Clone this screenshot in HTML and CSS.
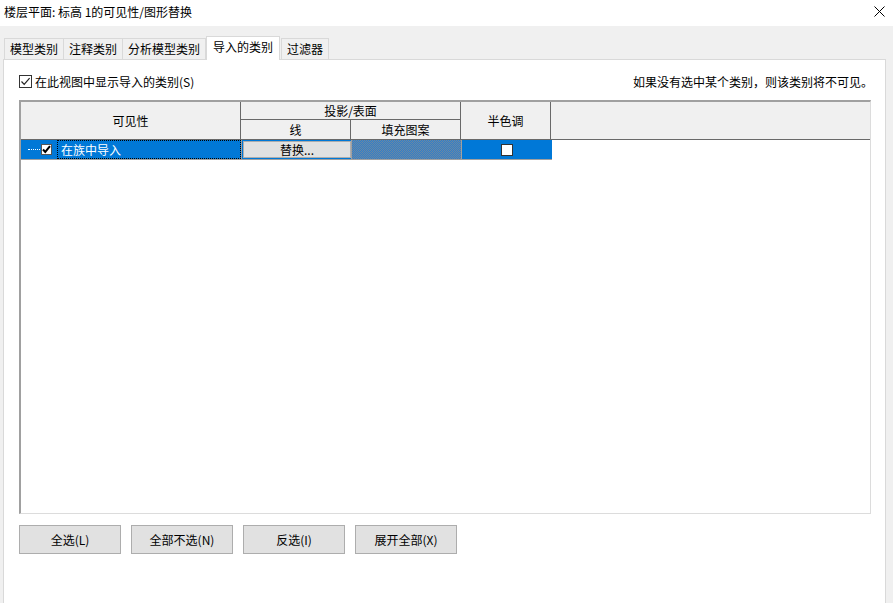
FILE: index.html
```html
<!DOCTYPE html>
<html lang="zh">
<head>
    <meta charset="UTF-8">
    <title>可见性/图形替换</title>
    <link rel="stylesheet" href="styles.css">
</head>
<body>
    <div class="titlebar">
        <span class="title">楼层平面: 标高 1的可见性/图形替换</span>
        <svg class="close" width="11" height="11" viewBox="0 0 11 11"><path d="M0.5 0.5L10.5 10.5M10.5 0.5L0.5 10.5" stroke="#000" stroke-width="1"/></svg>
    </div>

    <div class="dialog">
        <div class="tabs">
            <div class="tab">模型类别</div>
            <div class="tab">注释类别</div>
            <div class="tab">分析模型类别</div>
            <div class="tab active">导入的类别</div>
            <div class="tab">过滤器</div>
        </div>

        <div class="panel">
            <div class="topline">
                <label class="check-label">
                    <span class="cbox"><svg width="11" height="11" viewBox="0 0 11 11"><path d="M1.5 5.5L4.2 8.3L9.6 2.2" fill="none" stroke="#222" stroke-width="1.2"/></svg></span>
                    在此视图中显示导入的类别(S)
                </label>
                <span class="hint">如果没有选中某个类别，则该类别将不可见。</span>
            </div>

            <div class="grid">
                <div class="head">
                    <div class="hcell vis">可见性</div>
                    <div class="hgroup">
                        <div class="hcell htop">投影/表面</div>
                        <div class="hsub">
                            <div class="hcell line">线</div>
                            <div class="hcell fill">填充图案</div>
                        </div>
                    </div>
                    <div class="hcell half">半色调</div>
                    <div class="hcell rest"></div>
                </div>

                <div class="row">
                    <div class="cell vis">
                        <span class="dots"></span>
                        <span class="rbox"><svg width="9" height="9" viewBox="0 0 9 9"><path d="M1 4.5L3.3 7L8 1.2" fill="none" stroke="#000" stroke-width="2"/></svg></span>
                        <span class="name">在族中导入</span>
                    </div>
                    <div class="cell line"><span class="override">替换...</span></div>
                    <div class="cell fill pattern"></div>
                    <div class="cell half"><span class="hbox"></span></div>
                </div>
            </div>

            <div class="buttons">
                <button class="btn">全选(L)</button>
                <button class="btn">全部不选(N)</button>
                <button class="btn">反选(I)</button>
                <button class="btn">展开全部(X)</button>
            </div>
        </div>
    </div>
</body>
</html>
```

FILE: styles.css
```css
* {
    margin: 0;
    padding: 0;
    box-sizing: border-box;
    font-family: "Noto Sans CJK SC", "Noto Sans", sans-serif;
}

body {
    width: 893px;
    height: 603px;
    overflow: hidden;
    background: #f0f0f0;
    font-size: 12px;
    color: #000;
}

.titlebar {
    height: 26px;
    background: #fff;
    display: flex;
    align-items: center;
    justify-content: space-between;
    padding: 0 8px 4px 4px;
}

.title {
    font-size: 12px;
}

.dialog {
    padding: 10px 7px 0 3px;
}

.tabs {
    display: flex;
    align-items: flex-end;
    height: 23px;
    padding-left: 1px;
    position: relative;
    z-index: 1;
}

.tab {
    height: 21px;
    padding: 0 5px;
    line-height: 19px;
    border: 1px solid #d9d9d9;
    border-bottom: none;
    margin-right: -1px;
    background: #f0f0f0;
}

.tab.active {
    height: 24px;
    line-height: 20px;
    background: #fff;
    margin: 0 1px 0 1px;
    padding: 0 6px;
    position: relative;
    top: 1px;
}

.panel {
    background: #fff;
    border: 1px solid #d9d9d9;
    height: 560px;
    padding: 0 14px 0 15px;
}

.topline {
    display: flex;
    justify-content: space-between;
    align-items: center;
    height: 40px;
    padding-top: 2px;
}

.check-label {
    display: flex;
    align-items: center;
    gap: 3px;
}

.cbox {
    width: 13px;
    height: 13px;
    border: 1px solid #333;
    display: flex;
    align-items: center;
    justify-content: center;
}

.hint {
    margin-right: -2px;
}

.grid {
    width: 852px;
    height: 414px;
    border-top: 2px solid #a0a0a0;
    border-left: 2px solid #a0a0a0;
    border-right: 1px solid #dcdcdc;
    border-bottom: 1px solid #dcdcdc;
}

.head {
    display: flex;
    height: 38px;
    background: #f0f0f0;
    border-bottom: 1px solid #696969;
}

.hcell {
    display: flex;
    align-items: center;
    justify-content: center;
}

.head .vis {
    width: 220px;
    border-right: 1px solid #696969;
}

.hgroup {
    width: 220px;
    display: flex;
    flex-direction: column;
    border-right: 1px solid #696969;
}

.htop {
    height: 18px;
    border-bottom: 1px solid #696969;
}

.hsub {
    flex: 1;
    display: flex;
}

.hsub .line {
    width: 110px;
    border-right: 1px solid #696969;
}

.hsub .fill {
    flex: 1;
}

.head .half {
    width: 90px;
    border-right: 1px solid #696969;
}

.head .rest {
    flex: 1;
}

.row {
    display: flex;
    width: 531px;
    height: 20px;
    background: #0078d7;
    border-bottom: 1px solid #a0a0a0;
}

.cell {
    height: 19px;
}

.row .vis {
    width: 220px;
    display: flex;
    align-items: center;
    color: #fff;
}

.dots {
    width: 12px;
    margin-left: 7px;
    border-top: 1px dotted #fff;
}

.rbox {
    width: 11px;
    height: 11px;
    margin-left: 1px;
    background: #fff;
    border: 1px solid #555;
    display: flex;
    align-items: center;
    justify-content: center;
}

.name {
    flex: 1;
    height: 19px;
    margin-left: 5px;
    padding-left: 3px;
    line-height: 17px;
    border: 1px dotted #000;
}

.row .line {
    width: 110px;
    border-left: 1px solid #a0a0a0;
    padding: 1px 0 1px 1px;
}

.override {
    display: block;
    width: 108px;
    height: 17px;
    line-height: 16px;
    text-align: center;
    background: #e1e1e1;
    border: 1px solid #adadad;
}

.pattern {
    width: 110px;
    border-left: 1px solid #a0a0a0;
    background: repeating-conic-gradient(#2f7fcb 0 25%, #6d87a0 0 50%) 0 0 / 2px 2px;
}

.row .half {
    width: 90px;
    border-left: 1px solid #a0a0a0;
    display: flex;
    align-items: center;
    justify-content: center;
}

.hbox {
    width: 12px;
    height: 12px;
    background: #fff;
    border: 1px solid #333;
}

.buttons {
    display: flex;
    gap: 10px;
    margin-top: 11px;
}

.btn {
    width: 102px;
    height: 29px;
    background: #e1e1e1;
    border: 1px solid #adadad;
    font-size: 12px;
    color: #000;
}
```
